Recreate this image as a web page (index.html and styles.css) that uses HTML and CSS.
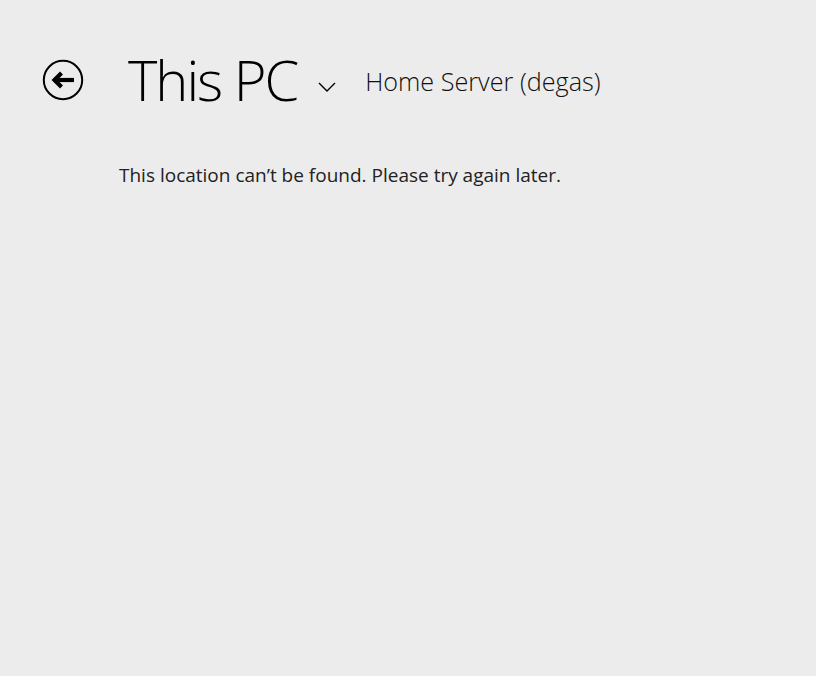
FILE: index.html
```html
<!DOCTYPE html>
<html>
<head>
<meta charset="utf-8">
<link rel="stylesheet" href="styles.css">
</head>
<body>
<div class="page">
  <header class="header">
    <button class="back" aria-label="Back">
      <svg width="42" height="42" viewBox="0 0 42 42">
        <circle cx="21" cy="21" r="19.2" fill="none" stroke="#000" stroke-width="2"/>
        <path d="M13 21 H32" stroke="#000" stroke-width="4.2" fill="none"/>
        <path d="M19.5 14 L12.5 21 L19.5 28" stroke="#000" stroke-width="4.2" fill="none" stroke-linejoin="miter" stroke-linecap="butt"/>
      </svg>
    </button>
    <h1 class="title">This PC</h1>
    <svg class="chevron" width="18" height="10" viewBox="0 0 18 10">
      <path d="M1 1 L9 9 L17 1" stroke="#000" stroke-width="1.4" fill="none"/>
    </svg>
    <div class="sub">Home Server (degas)</div>
  </header>
  <p class="message">This location can’t be found. Please try again later.</p>
</div>
</body>
</html>
```
FILE: styles.css
```css
html, body {
  margin: 0;
  padding: 0;
  background: #ececec;
  height: 100%;
}
.page {
  font-family: "Open Sans", "Noto Sans", sans-serif;
  color: #000;
}
.header {
  display: flex;
  align-items: flex-start;
  height: 107px;
  padding-left: 42px;
}
.back {
  border: 0;
  padding: 0;
  background: none;
  width: 42px;
  height: 42px;
  display: block;
  margin: 59px 44px 0 0;
}
.back svg { display: block; }
.title {
  margin: 51px 0 0 0;
  font-weight: 300;
  font-size: 56px;
  line-height: 56px;
  letter-spacing: -2px;
  white-space: nowrap;
}
.chevron {
  display: block;
  margin: 82px 0 0 21px;
}
.sub {
  margin: 66px 0 0 29px;
  font-weight: 300;
  font-size: 25.2px;
  line-height: 30px;
  color: #111;
  white-space: nowrap;
}
.message {
  margin: 55px 0 0 119px;
  font-size: 19px;
  line-height: 26px;
  color: #222;
}
```
